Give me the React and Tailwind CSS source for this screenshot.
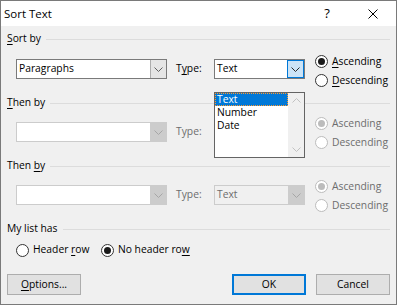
const Chevron = ({ up, color = '#606060' }) => (
  <svg width="9" height="5" viewBox="0 0 9 5">
    <polyline
      points={up ? '0.5,4.5 4.5,0.5 8.5,4.5' : '0.5,0.5 4.5,4.5 8.5,0.5'}
      fill="none"
      stroke={color}
      strokeWidth="1"
    />
  </svg>
);

const U = ({ children }) => <span className="underline underline-offset-[2px]">{children}</span>;

function GroupLabel({ children, className }) {
  return (
    <div className={`flex items-center ${className}`}>
      <span>{children}</span>
      <div className="ml-[5px] flex-1 h-px bg-[#dcdcdc]" />
    </div>
  );
}

function Radio({ checked, disabled, children, className = '' }) {
  return (
    <div className={`flex items-center ${disabled ? 'text-[#6d6d6d]' : 'text-black'} ${className}`}>
      <span
        className={`w-[13px] h-[13px] shrink-0 rounded-full border flex items-center justify-center bg-white ${
          disabled ? 'border-[#bcbcbc]' : 'border-[#333333]'
        }`}
      >
        {checked && (
          <span className={`w-[7px] h-[7px] rounded-full ${disabled ? 'bg-[#bcbcbc]' : 'bg-[#1a1a1a]'}`} />
        )}
      </span>
      <span className="ml-[4px]">{children}</span>
    </div>
  );
}

function Combo({ value, width, disabled, plain }) {
  return (
    <div
      className={`${width} h-[20px] border flex ${
        disabled ? 'border-[#cccccc]' : 'border-[#7a7a7a]'
      } ${plain ? 'bg-[#f0f0f0]' : 'bg-white'}`}
    >
      <div className={`flex-1 flex items-center pl-[2px] ${disabled ? 'text-[#6d6d6d]' : 'text-black'}`}>
        {value}
      </div>
      <div
        className={`w-[16px] h-full flex items-center justify-center ${
          disabled ? 'bg-[#cccccc]' : 'bg-[#e5e5e5] border-l border-[#adadad]'
        }`}
      >
        <Chevron color={disabled ? '#a6a6a6' : '#606060'} />
      </div>
    </div>
  );
}

function TypeLabel({ disabled }) {
  return (
    <div className={`ml-[9px] w-[38px] h-[20px] flex items-center ${disabled ? 'text-[#6d6d6d]' : 'text-black'}`}>
      {disabled ? 'Type:' : <span>T<U>y</U>pe:</span>}
    </div>
  );
}

export default function App() {
  return (
    <div className="w-[397px] h-[305px] border border-[#7a7a7a] bg-[#f0f0f0] flex flex-col font-['Segoe_UI','Open_Sans',sans-serif] text-[10.3px] text-black">
      {/* Title bar */}
      <div className="h-[25px] shrink-0 bg-white flex items-center">
        <span className="ml-[3px] text-[11.5px]">Sort Text</span>
        <div className="ml-auto w-[46px] h-full flex items-center justify-center text-[13px]">?</div>
        <div className="w-[46px] h-full flex items-center justify-center">
          <svg width="10" height="10" viewBox="0 0 10 10">
            <path d="M0.5 0.5 L9.5 9.5 M9.5 0.5 L0.5 9.5" stroke="#000" strokeWidth="1" />
          </svg>
        </div>
      </div>

      <div className="px-[6px] flex flex-col">
        {/* Sort by */}
        <GroupLabel className="h-[26px]">
          <U>S</U>ort by
        </GroupLabel>
        <div className="h-[40px] flex pl-[9px]">
          <div className="mt-[7px] flex">
            <Combo value="Paragraphs" width="w-[151px]" />
            <TypeLabel />
            <div className="relative">
              <div className="w-[91px] h-[20px] border border-[#7a7a7a] bg-white flex">
                <div className="flex-1 flex items-center pl-[2px]">Text</div>
                <div className="w-[17px] h-full bg-[#cce4f7] border border-[#0078d7] flex items-center justify-center">
                  <Chevron color="#2b2b2b" />
                </div>
              </div>
              <div className="absolute left-0 top-full w-[91px] h-[66px] border border-[#646464] bg-white flex z-10">
                <div className="flex-1 flex flex-col">
                  <div className="h-[13px] leading-[11px] pl-[1px] bg-[#0078d7] text-white border border-dotted border-[#ff9a2e]">
                    Text
                  </div>
                  <div className="h-[13px] leading-[13px] pl-[2px]">Number</div>
                  <div className="h-[13px] leading-[13px] pl-[2px]">Date</div>
                </div>
                <div className="w-[16px] h-full bg-[#f0f0f0] flex flex-col items-center justify-between py-[5px]">
                  <Chevron up color="#c2c2c2" />
                  <Chevron color="#c2c2c2" />
                </div>
              </div>
            </div>
          </div>
          <div className="ml-[10px] flex flex-col">
            <Radio checked className="h-[19px]">
              <U>A</U>scending
            </Radio>
            <Radio className="h-[19px]">
              <U>D</U>escending
            </Radio>
          </div>
        </div>

        {/* Then by */}
        <GroupLabel className="h-[22px]">
          <U>T</U>hen by
        </GroupLabel>
        <div className="h-[41px] flex pl-[9px]">
          <div className="mt-[8px] flex">
            <Combo value="" width="w-[151px]" disabled />
            <TypeLabel disabled />
            <div className="w-[91px]" />
          </div>
          <div className="ml-[10px] flex flex-col">
            <Radio checked disabled className="h-[19px]">
              Ascending
            </Radio>
            <Radio disabled className="h-[19px]">
              Descending
            </Radio>
          </div>
        </div>

        {/* Then by */}
        <GroupLabel className="h-[22px]">
          Then <U>b</U>y
        </GroupLabel>
        <div className="h-[41px] flex pl-[9px]">
          <div className="mt-[8px] flex">
            <Combo value="" width="w-[151px]" disabled />
            <TypeLabel disabled />
            <Combo value="Text" width="w-[91px]" disabled plain />
          </div>
          <div className="ml-[10px] flex flex-col">
            <Radio checked disabled className="h-[19px]">
              Ascending
            </Radio>
            <Radio disabled className="h-[19px]">
              Descending
            </Radio>
          </div>
        </div>

        {/* My list has */}
        <GroupLabel className="h-[22px]">My list has</GroupLabel>
        <div className="h-[20px] flex items-center pl-[9px]">
          <Radio className="w-[85px]">
            Header <U>r</U>ow
          </Radio>
          <Radio checked>
            No header ro<U>w</U>
          </Radio>
        </div>

        {/* Buttons */}
        <div className="mt-[14px] flex">
          <button className="w-[74px] h-[21px] bg-[#e1e1e1] border border-[#adadad] flex items-center justify-center">
            <span>
              <U>O</U>ptions...
            </span>
          </button>
          <button className="ml-auto w-[74px] h-[21px] bg-[#e1e1e1] border-2 border-[#0078d7] flex items-center justify-center">
            OK
          </button>
          <button className="ml-[10px] w-[74px] h-[21px] bg-[#e1e1e1] border border-[#adadad] flex items-center justify-center">
            Cancel
          </button>
        </div>
      </div>
    </div>
  );
}
